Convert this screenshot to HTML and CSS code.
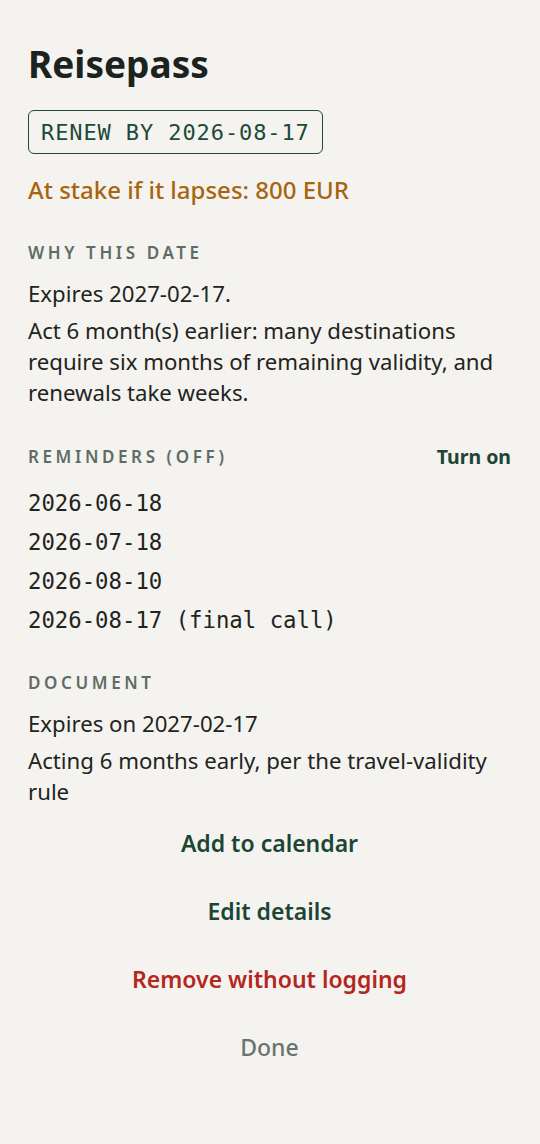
FILE: index.html
```html
<!DOCTYPE html>
<html lang="en">
<head>
<meta charset="utf-8">
<title>Reisepass</title>
<link rel="stylesheet" href="styles.css">
</head>
<body>
<main class="sheet">
  <h1 class="title">Reisepass</h1>
  <div class="badge-row"><span class="badge">RENEW BY 2026-08-17</span></div>
  <p class="stake">At stake if it lapses: 800 EUR</p>

  <section class="section">
    <h2 class="label">WHY THIS DATE</h2>
    <p class="text">Expires 2027-02-17.</p>
    <p class="text">Act 6 month(s) earlier: many destinations require six months of remaining validity, and renewals take weeks.</p>
  </section>

  <section class="section">
    <div class="label-row">
      <h2 class="label">REMINDERS (OFF)</h2>
      <button class="link">Turn on</button>
    </div>
    <ul class="dates">
      <li>2026-06-18</li>
      <li>2026-07-18</li>
      <li>2026-08-10</li>
      <li>2026-08-17 (final call)</li>
    </ul>
  </section>

  <section class="section doc">
    <h2 class="label">DOCUMENT</h2>
    <p class="text">Expires on 2027-02-17</p>
    <p class="text">Acting 6 months early, per the travel-validity rule</p>
  </section>

  <div class="actions">
    <button class="action primary">Add to calendar</button>
    <button class="action primary">Edit details</button>
    <button class="action danger">Remove without logging</button>
    <button class="action muted">Done</button>
  </div>
</main>
</body>
</html>
```

FILE: styles.css
```css
* { box-sizing: border-box; }
html, body { margin: 0; padding: 0; }
body {
  background: #f4f3ef;
  font-family: "Noto Sans", "Open Sans", sans-serif;
  color: #1f2420;
  width: 540px;
  min-height: 1144px;
}
.sheet {
  padding: 42px 29px 40px 28px;
  display: flex;
  flex-direction: column;
}
.title {
  margin: 0;
  font-size: 37px;
  line-height: 44px;
  font-weight: 700;
  color: #1b231e;
}
.badge-row { display: flex; margin-top: 24px; }
.badge {
  border: 1.5px solid #1e4a38;
  border-radius: 6px;
  height: 44px;
  padding: 0 12px;
  display: flex;
  align-items: center;
  font-family: "DejaVu Sans Mono", "Liberation Mono", monospace;
  font-size: 22px;
  letter-spacing: 0.9px;
  color: #1e4a38;
}
.stake {
  margin: 21px 0 0 0;
  font-size: 24px;
  line-height: 30px;
  font-weight: 500;
  color: #a8650f;
}
.section { margin-top: 38px; display: flex; flex-direction: column; }
.section + .section { margin-top: 39px; }
.label {
  margin: 0 0 15px 0;
  font-size: 17px;
  line-height: 20px;
  font-weight: 600;
  letter-spacing: 3.6px;
  color: #5e6c64;
}
.text {
  margin: 0;
  font-size: 22.2px;
  line-height: 31px;
  color: #1f2420;
}
.text + .text { margin-top: 6px; }
.label-row {
  display: flex;
  justify-content: space-between;
  align-items: center;
  margin-bottom: 17px;
}
.label-row .label { margin: 0; }
.link {
  border: 0;
  background: none;
  padding: 0;
  font-family: inherit;
  font-size: 19.5px;
  line-height: 20px;
  font-weight: 700;
  color: #1d4434;
}
.dates {
  list-style: none;
  margin: 0;
  padding: 0;
  font-family: "DejaVu Sans Mono", "Liberation Mono", monospace;
  font-size: 22.3px;
  line-height: 39px;
  color: #1f2420;
}
.section.doc { margin-top: 33px; }
.actions {
  display: flex;
  flex-direction: column;
  margin-top: 2px;
}
.action {
  height: 68px;
  border: 0;
  background: none;
  font-family: inherit;
  font-size: 23px;
  font-weight: 600;
  cursor: pointer;
}
.primary { color: #1c4535; }
.danger { color: #b5261e; }
.muted { color: #6a746e; font-weight: 500; }
```
